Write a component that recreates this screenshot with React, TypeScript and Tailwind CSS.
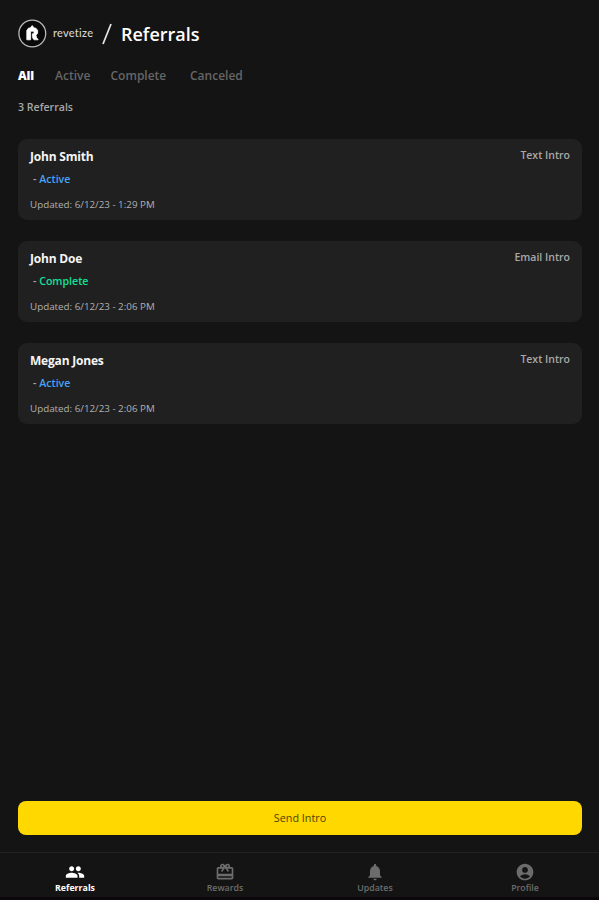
import { MdAccountCircle, MdNotifications, MdPeople, MdRedeem } from 'react-icons/md';

const tabs = [
    { label: 'All', className: 'w-[37px] font-extrabold text-white tracking-[-0.2px]' },
    { label: 'Active', className: 'w-[55.5px] font-semibold text-[#666]' },
    { label: 'Complete', className: 'w-[79.5px] font-semibold text-[#666]' },
    { label: 'Canceled', className: 'font-semibold text-[#666]' },
];

const referrals = [
    { name: 'John Smith', status: 'Active', updated: '6/12/23 - 1:29 PM', type: 'Text Intro' },
    { name: 'John Doe', status: 'Complete', updated: '6/12/23 - 2:06 PM', type: 'Email Intro' },
    { name: 'Megan Jones', status: 'Active', updated: '6/12/23 - 2:06 PM', type: 'Text Intro' },
];

const navItems = [
    { label: 'Referrals', icon: MdPeople, active: true },
    { label: 'Rewards', icon: MdRedeem, active: false },
    { label: 'Updates', icon: MdNotifications, active: false },
    { label: 'Profile', icon: MdAccountCircle, active: false },
];

function Logo() {
    return (
        <svg className="w-[29px] h-[29px]" viewBox="0 0 29 29" fill="none">
            <circle cx="14.3" cy="14.5" r="13.4" fill="#090909" stroke="#b8b8b8" strokeWidth="1.3" />
            <path
                d="M8.8 20.8V11.4L10.6 9H12.2L14.2 6.6L16.2 9H17.6L19.6 11.2V14.4L17.9 16.2L18.6 18.6L20.2 20.8H16.4Q14.6 20 14.4 17.6V14.8H16V12.2H12.6V20.8Z"
                fill="#fff"
                stroke="#fff"
                strokeWidth="0.8"
                strokeLinejoin="round"
            />
        </svg>
    );
}

export default function App() {
    return (
        <div className="h-[900px] w-full bg-[#141414] flex flex-col overflow-hidden font-['Open_Sans',sans-serif]">
            <header className="flex items-center h-[29px] mt-[19px] px-[18px]">
                <Logo />
                <span className="ml-[6px] mb-[2px] w-[49px] text-[11px] leading-4 font-medium text-[#d4d4d4] font-['Lato',sans-serif] tracking-[0.25px]">
                    revetize
                </span>
                <svg className="w-[10px] h-[22px]" viewBox="0 0 10 22">
                    <path d="M1 21L9 1" stroke="#e8e8e8" strokeWidth="1.7" />
                </svg>
                <h1 className="ml-[9px] text-[18px] leading-6 font-semibold text-white">Referrals</h1>
            </header>

            <div className="flex mt-[19px] px-[18px] text-[12px] leading-[18px]">
                {tabs.map((tab) => (
                    <button key={tab.label} className={`text-left ${tab.className}`}>
                        {tab.label}
                    </button>
                ))}
            </div>

            <p className="mt-[14px] px-[18px] text-[10.6px] leading-4 font-semibold text-[#a8a8a8]">3 Referrals</p>

            <main className="flex-1 mt-6 pl-[18px] pr-[17px] flex flex-col gap-[21px]">
                {referrals.map((item) => (
                    <div key={item.name} className="h-[81px] rounded-[9px] bg-[#202020] px-3 flex justify-between">
                        <div>
                            <h2 className="mt-[9px] text-[12px] leading-[18px] font-bold tracking-[-0.2px] text-[#f5f5f5]">
                                {item.name}
                            </h2>
                            <div className="mt-[5px] pl-[3px] text-[10.6px] leading-4 font-semibold text-[#aaa]">
                                -{' '}
                                <span className={item.status === 'Active' ? 'text-[#45a2f5]' : 'text-[#10e096]'}>
                                    {item.status}
                                </span>
                            </div>
                            <p className="mt-[10px] text-[9.8px] leading-4 text-[#b0b0b0]">Updated: {item.updated}</p>
                        </div>
                        <span className="mt-2 text-[10.5px] leading-4 font-semibold text-[#a8a8a8]">{item.type}</span>
                    </div>
                ))}
            </main>

            <div className="pl-[18px] pr-[17px] mb-[17px]">
                <button className="w-full h-[34px] rounded-[8px] bg-[#ffd800] text-[10.8px] leading-4 text-[#4a3f00]">
                    Send Intro
                </button>
            </div>

            <nav className="h-12 -mr-px border-t border-[#222] border-b-[3px] border-b-[#0b070b] grid grid-cols-4">
                {navItems.map(({ label, icon: Icon, active }) => (
                    <button
                        key={label}
                        className={`flex flex-col items-center pt-[9px] ${active ? 'text-white' : 'text-[#6c6c6c]'}`}
                    >
                        <Icon className="w-5 h-5" />
                        <span className={`text-[8.8px] leading-3 ${active ? 'font-bold' : 'font-semibold'}`}>{label}</span>
                    </button>
                ))}
            </nav>
        </div>
    );
}
